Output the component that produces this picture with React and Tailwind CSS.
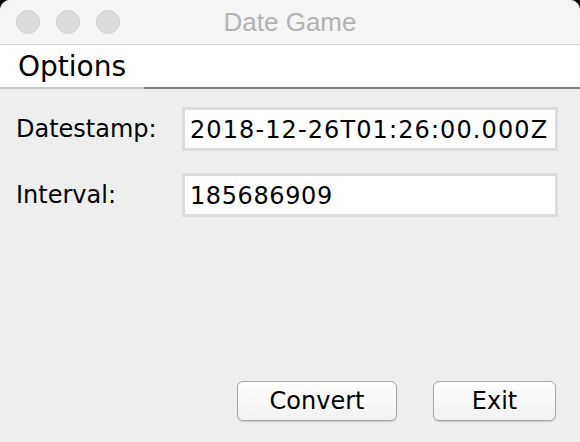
import React from 'react'

function Field({ label, value, tracking }) {
  return (
    <div className="flex items-center h-[44px]">
      <div className="w-[182px] pl-[16px] text-[24px] text-black">{label}</div>
      <div className={`w-[376px] h-[44px] border-[3px] border-[#dcdcdc] bg-white flex items-center px-[5px] pt-[1px] text-[24px] text-black overflow-hidden whitespace-nowrap ${tracking}`}>
        {value}
      </div>
    </div>
  )
}

function MacButton({ children, className }) {
  return (
    <button
      className={`h-[40px] rounded-[6px] border border-[#a6a6a6] bg-gradient-to-b from-white to-[#f1f1f1] text-[24px] text-black shadow-[0_1px_1px_rgba(0,0,0,0.15)] ${className}`}
    >
      {children}
    </button>
  )
}

export default function App() {
  return (
    <div className="w-[580px] h-[442px] bg-black" style={{ fontFamily: '"DejaVu Sans", sans-serif' }}>
      <div className="w-full h-full rounded-t-[10px] overflow-hidden bg-[#eeeeee] flex flex-col">
        {/* title bar */}
        <div className="h-[45px] bg-[#f5f5f5] border-b border-[#d3d3d3] flex items-center relative shrink-0">
          <div className="flex gap-[16px] pl-[16px]">
            <span className="w-[24px] h-[24px] rounded-full bg-[#dcdcdc] border border-[#d0d0d0]" />
            <span className="w-[24px] h-[24px] rounded-full bg-[#dcdcdc] border border-[#d0d0d0]" />
            <span className="w-[24px] h-[24px] rounded-full bg-[#dcdcdc] border border-[#d0d0d0]" />
          </div>
          <div
            className="absolute left-0 right-0 text-center text-[26px] text-[#b3b3b3]"
            style={{ fontFamily: '"Liberation Sans", Arial, sans-serif' }}
          >
            Date Game
          </div>
        </div>

        {/* menu bar */}
        <div className="h-[44px] bg-white flex shrink-0">
          <div className="w-[144px] border-b-2 border-[#c8c8c8] pl-[18px] pt-[2px] flex items-center text-[28px] text-black">
            Options
          </div>
          <div className="flex-1 border-b-2 border-[#808080]" />
        </div>

        {/* form */}
        <div className="flex flex-col gap-[22px] pt-[18px]">
          <Field label="Datestamp:" value="2018-12-26T01:26:00.000Z" tracking="tracking-[1.1px]" />
          <Field label="Interval:" value="185686909" tracking="tracking-[0.6px]" />
        </div>

        <div className="flex-1" />

        <div className="flex justify-end gap-[36px] pr-[24px] pb-[21px]">
          <MacButton className="w-[160px]">Convert</MacButton>
          <MacButton className="w-[123px]">Exit</MacButton>
        </div>
      </div>
    </div>
  )
}
